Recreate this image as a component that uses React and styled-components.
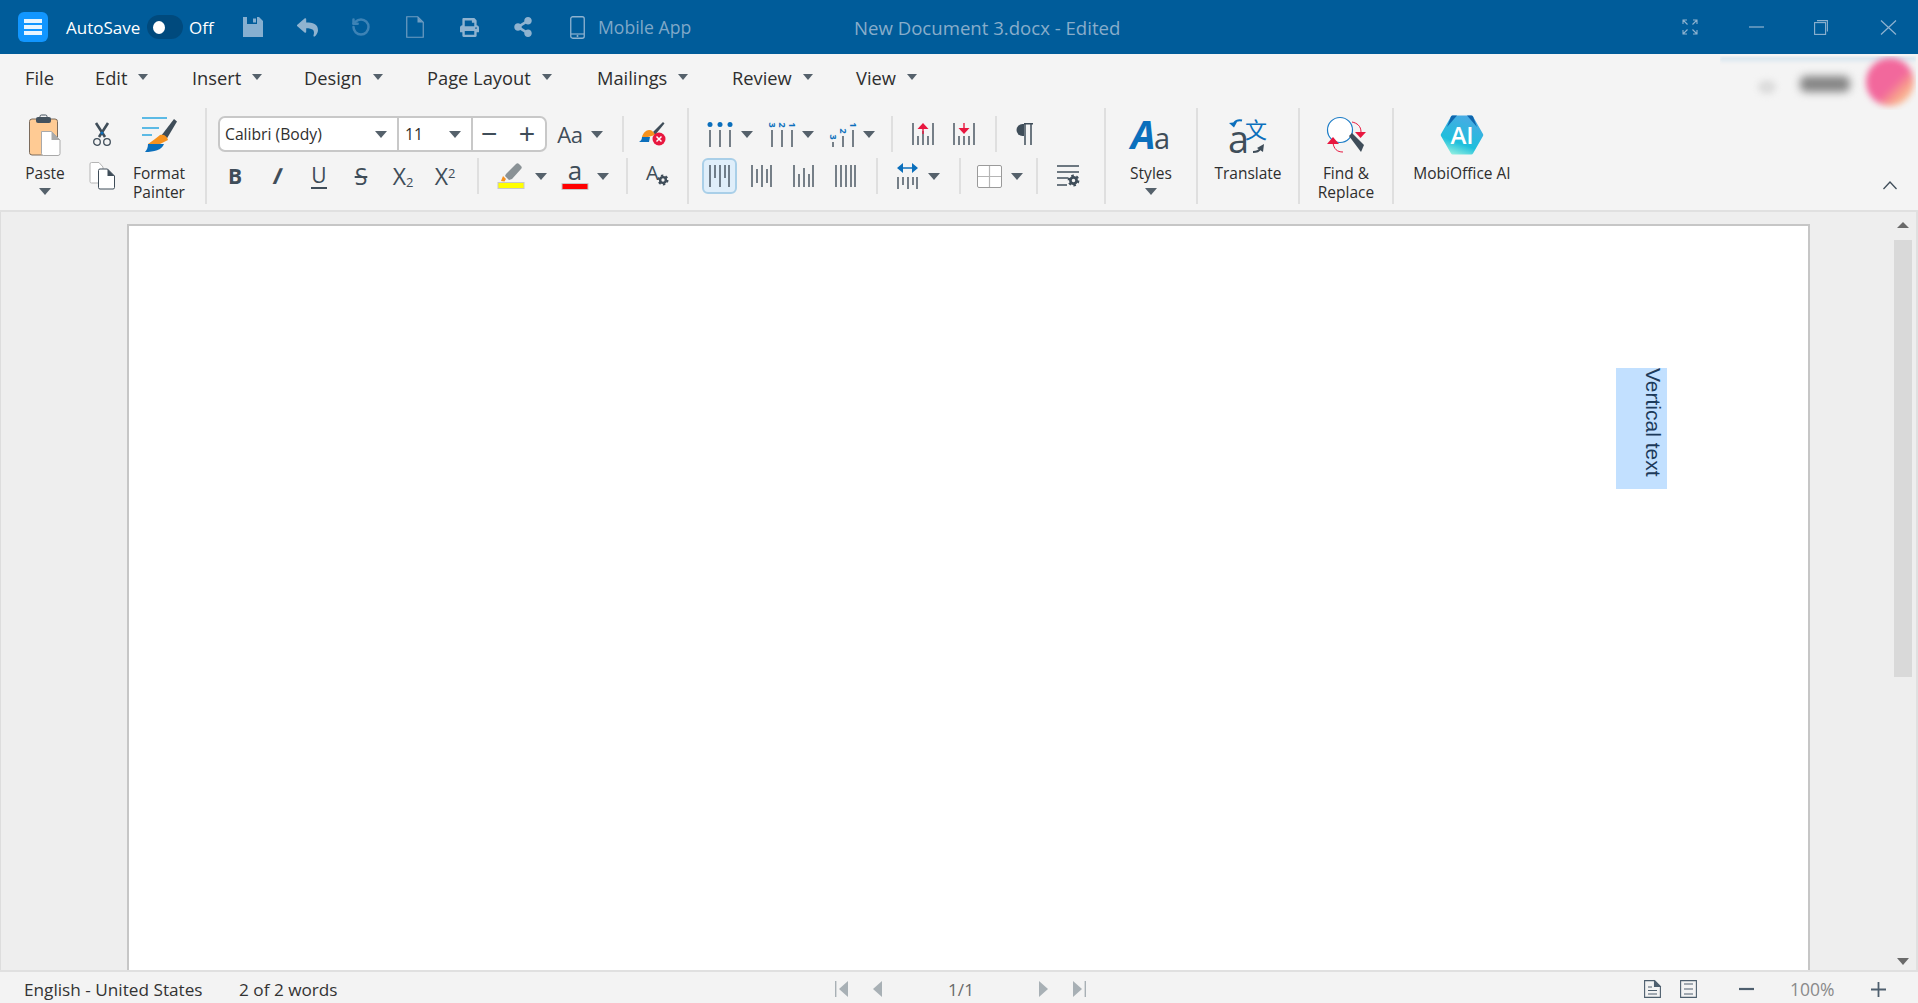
import React from 'react';
import styled, { createGlobalStyle } from 'styled-components';
import { FaPrint, FaReply, FaShareAlt } from 'react-icons/fa';
import { RotateCcw } from 'lucide-react';

const ICON = '#3f4d59';
const BLUE = '#0b6fbc';
const RED = '#e8173f';
const UI_FONT = '"Open Sans", "Noto Sans", sans-serif';

const GlobalStyle = createGlobalStyle`
  html, body {
    margin: 0;
    height: 100%;
    overflow: hidden;
    background: #f4f4f4;
  }
  #root {
    height: 100%;
  }
  svg {
    overflow: visible;
  }
`;

const AppWindow = styled.div`
  display: flex;
  flex-direction: column;
  height: 100%;
  font-family: ${UI_FONT};
  color: #2e2e2e;
`;

/* title bar */

const TitleBar = styled.header`
  display: flex;
  align-items: center;
  flex: none;
  height: 54px;
  padding-left: 18px;
  background: #005c9a;
  color: #fff;
`;

const Logo = styled.div`
  display: flex;
  flex-direction: column;
  justify-content: center;
  gap: 2px;
  box-sizing: border-box;
  width: 30px;
  height: 30px;
  padding: 0 6px;
  border-radius: 6px;
  background: #1196ff;
`;

const LogoBar = styled.span`
  display: block;
  height: 4px;
  background: #e8f5ff;
`;

const AutoSaveLabel = styled.span`
  flex: none;
  width: 75px;
  margin-left: 18px;
  font-size: 17px;
  white-space: nowrap;
`;

const Toggle = styled.span`
  display: flex;
  align-items: center;
  box-sizing: border-box;
  flex: none;
  width: 36px;
  height: 24px;
  margin-left: 6px;
  padding-left: 6px;
  border-radius: 12px;
  background: #004a7d;
`;

const ToggleKnob = styled.span`
  display: block;
  width: 12px;
  height: 13px;
  border-radius: 50%;
  background: #fff;
`;

const OffLabel = styled.span`
  flex: none;
  width: 25px;
  margin-left: 6px;
  font-size: 17px;
`;

const TitleTool = styled.span`
  display: flex;
  align-items: center;
  justify-content: center;
  flex: none;
  width: ${(p) => p.$w}px;
  margin-left: ${(p) => p.$ml}px;
  color: ${(p) => p.$color || '#8fb3d0'};
`;

const MobileLabel = styled.span`
  flex: none;
  width: 93px;
  margin-left: 13px;
  font-size: 17.6px;
  white-space: nowrap;
  color: #7fa8c8;
`;

const DocTitle = styled.span`
  flex: none;
  width: 268px;
  margin-left: 163px;
  font-size: 18.6px;
  white-space: nowrap;
  color: #88adca;
`;

/* menu */

const MenuBar = styled.nav`
  position: relative;
  display: flex;
  align-items: center;
  flex: none;
  height: 51px;
  padding: 0 0 5px 25px;
  box-sizing: border-box;
  font-size: 18.3px;
`;

const MenuItem = styled.span`
  display: flex;
  align-items: center;
  flex: none;
  width: ${(p) => p.$w}px;
`;

const Caret = styled.span`
  display: block;
  flex: none;
  width: 0;
  height: 0;
  margin-left: ${(p) => p.$ml || 0}px;
  border-left: ${(p) => (p.$size || 12) / 2}px solid transparent;
  border-right: ${(p) => (p.$size || 12) / 2}px solid transparent;
  border-top: ${(p) => Math.round((p.$size || 12) * 0.55)}px solid #55616b;
`;

const BlurredAccount = styled.div`
  position: absolute;
  top: 2px;
  right: 2px;
  width: 196px;
  height: 54px;
  overflow: hidden;
`;

const BlurBand = styled.span`
  position: absolute;
  top: 1px;
  left: 0;
  right: 0;
  height: 6px;
  background: linear-gradient(#d6e4ee, #eef2f4);
  filter: blur(1px);
`;

const BlurBlob = styled.span`
  position: absolute;
  left: ${(p) => p.$left}px;
  top: ${(p) => p.$top}px;
  width: ${(p) => p.$w}px;
  height: ${(p) => p.$h}px;
  border-radius: ${(p) => p.$radius};
  background: ${(p) => p.$bg};
  filter: blur(${(p) => p.$blur}px);
`;

/* ribbon */

const Ribbon = styled.section`
  position: relative;
  display: flex;
  align-items: flex-start;
  flex: none;
  box-sizing: border-box;
  height: 107px;
  padding-top: 3px;
  border-bottom: 2px solid #e0e0e0;
`;

const RibbonSep = styled.span`
  display: block;
  flex: none;
  width: 2px;
  height: 96px;
  background: #dfdfdf;
`;

const ClipboardGroup = styled.div`
  display: flex;
  flex: none;
  width: 205px;
`;

const RibbonButton = styled.div`
  display: flex;
  flex-direction: column;
  align-items: center;
  flex: none;
  width: ${(p) => p.$w}px;
`;

const IconSlot = styled.div`
  display: flex;
  align-items: center;
  justify-content: center;
  height: 54px;
  margin-bottom: 2px;
`;

const ButtonLabel = styled.span`
  font-size: 15.5px;
  line-height: 19px;
  text-align: center;
  white-space: nowrap;
`;

const ButtonCaret = styled(Caret)`
  margin-top: 5px;
`;

const ClipColumn = styled.div`
  display: flex;
  flex-direction: column;
  align-items: center;
  gap: 16px;
  flex: none;
  width: 24px;
  padding-top: 15px;
`;

const ToolGroup = styled.div`
  display: flex;
  flex-direction: column;
  gap: 6px;
  flex: none;
  box-sizing: border-box;
  width: ${(p) => p.$w}px;
  padding-top: 8px;
`;

const ToolRow = styled.div`
  display: flex;
  align-items: center;
  height: 36px;
  padding-left: ${(p) => p.$pl}px;
`;

const Tool = styled.span`
  display: flex;
  align-items: center;
  justify-content: center;
  flex: none;
  width: ${(p) => p.$w}px;
  margin-left: ${(p) => p.$ml || 0}px;
  color: ${ICON};
  font-family: "Liberation Sans", sans-serif;
  font-size: 22px;
`;

const ActiveTool = styled(Tool)`
  box-sizing: border-box;
  height: 36px;
  border: 2px solid #a9cfe8;
  border-radius: 6px;
  background: #dfeefa;
`;

const RowSep = styled.span`
  display: block;
  flex: none;
  width: 2px;
  height: 36px;
  margin-left: ${(p) => p.$ml}px;
  background: #dfdfdf;
`;

const FontCombo = styled.div`
  display: flex;
  align-items: stretch;
  box-sizing: border-box;
  flex: none;
  width: 329px;
  height: 36px;
  border: 2px solid #c8c8c8;
  border-radius: 7px;
  background: #fff;
`;

const ComboCell = styled.div`
  display: flex;
  align-items: center;
  justify-content: space-between;
  box-sizing: border-box;
  flex: none;
  width: ${(p) => p.$w}px;
  padding: 0 10px 0 ${(p) => p.$pl}px;
  border-left: ${(p) => (p.$divider ? '2px solid #c8c8c8' : 'none')};
  font-size: 15.7px;
  color: #2e2e2e;
`;

const StepSign = styled.span`
  color: ${ICON};
  font-family: "Liberation Sans", sans-serif;
  font-size: 28px;
  font-weight: 300;
  line-height: 30px;
`;

const CaseLabel = styled.span`
  font-size: 22px;
  letter-spacing: -0.4px;
  color: ${ICON};
  font-family: ${UI_FONT};
`;

const BoldGlyph = styled.b`
  font-family: ${UI_FONT};
  font-size: 21px;
`;

const ItalicGlyph = styled.i`
  display: inline-block;
  font-size: 23px;
  font-weight: 700;
  transform: skewX(-14deg);
`;

const UnderGlyph = styled.span`
  font-family: ${UI_FONT};
  font-size: 21px;
  line-height: 24px;
  border-bottom: 2px solid ${ICON};
`;

const StrikeGlyph = styled.span`
  font-family: ${UI_FONT};
  font-size: 23px;
  text-decoration: line-through;
  text-decoration-thickness: 1.5px;
`;

const ScriptGlyph = styled.span`
  font-family: ${UI_FONT};
  font-size: 23px;
  white-space: nowrap;
`;

const ScriptMark = styled.span`
  font-size: 13px;
  position: relative;
  top: ${(p) => p.$top}px;
`;

const CollapseButton = styled.span`
  position: absolute;
  right: 21px;
  bottom: 20px;
  display: flex;
  color: ${ICON};
`;

/* document */

const DocArea = styled.main`
  display: flex;
  flex: 1;
  min-height: 0;
  box-sizing: border-box;
  padding: 12px 4px 0 126px;
  border-left: 1px solid #dddddd;
  border-right: 2px solid #e0e0e0;
  background: #eeeeee;
`;

const Page = styled.div`
  position: relative;
  box-sizing: border-box;
  flex: none;
  width: 1683px;
  border: 2px solid #c6c6c6;
  border-bottom: none;
  background: #fff;
`;

const VerticalText = styled.div`
  position: absolute;
  top: 142px;
  left: 1487px;
  box-sizing: border-box;
  width: 51px;
  height: 121px;
  padding-right: 2px;
  background: #c2e0ff;
  color: #1c3a5a;
  font-family: "Liberation Sans", sans-serif;
  font-size: 21px;
  line-height: 24px;
  writing-mode: vertical-rl;
  white-space: nowrap;
`;

const ScrollBar = styled.div`
  display: flex;
  flex-direction: column;
  align-items: center;
  flex: none;
  width: 18px;
  margin: -2px 0 0 84px;
  padding-bottom: 5px;
  box-sizing: border-box;
`;

const ScrollUp = styled.span`
  flex: none;
  width: 0;
  height: 0;
  border-left: 6px solid transparent;
  border-right: 6px solid transparent;
  border-bottom: 6px solid #6a6a6a;
`;

const ScrollThumb = styled.span`
  flex: none;
  width: 18px;
  height: 437px;
  margin-top: 12px;
  background: #d9d9d9;
`;

const ScrollDown = styled.span`
  flex: none;
  width: 0;
  height: 0;
  margin-top: auto;
  border-left: 6px solid transparent;
  border-right: 6px solid transparent;
  border-top: 7px solid #6a6a6a;
`;

/* status bar */

const StatusBar = styled.footer`
  display: flex;
  align-items: center;
  flex: none;
  box-sizing: border-box;
  height: 33px;
  padding: 3px 0 0 24px;
  border-top: 2px solid #e0e0e0;
  background: #f3f3f3;
  font-size: 17.2px;
  color: #333;
`;

const StatusText = styled.span`
  flex: none;
  width: ${(p) => p.$w}px;
  margin-left: ${(p) => p.$ml || 0}px;
  white-space: nowrap;
`;

const StatusIcon = styled.span`
  display: flex;
  justify-content: center;
  flex: none;
  width: ${(p) => p.$w}px;
  margin-left: ${(p) => p.$ml}px;
`;

const PageCount = styled.span`
  flex: none;
  width: 26px;
  margin-left: 63px;
  color: #6a6a6a;
  white-space: nowrap;
`;

const ZoomValue = styled.span`
  flex: none;
  width: 46px;
  margin-left: 36px;
  color: #8a8a8a;
  font-size: 17.500px;
  white-space: nowrap;
`;

/* icons */

const Bars = ({ w = 21, h = 22, lines, children }) => (
  <svg width={w} height={h} viewBox={`0 0 ${w} ${h}`}>
    {lines.map(([x, y1, y2]) => (
      <line key={`${x}-${y1}`} x1={x} x2={x} y1={y1} y2={y2} stroke={ICON} strokeWidth="1.4" />
    ))}
    {children}
  </svg>
);

const Gear = ({ cx, cy, r = 4, color = ICON }) => (
  <g fill="none" stroke={color}>
    <circle cx={cx} cy={cy} r={r * 0.72} strokeWidth={r * 0.62} />
    <circle cx={cx} cy={cy} r={r * 1.12} strokeWidth={r * 0.5} strokeDasharray={`${r * 0.58} ${r * 0.58}`} />
  </g>
);

const SaveIcon = () => (
  <svg width="20" height="20" viewBox="0 0 20 20">
    <path d="M0 0h16l4 4v16H0z" fill="#86afd0" />
    <path d="M4 0h10v7H4z" fill="#005c9a" />
    <path d="M10 1.500h3v4h-3z" fill="#86afd0" />
  </svg>
);

const PasteIcon = () => (
  <svg width="32" height="41" viewBox="0 0 32 41">
    <rect x="0.5" y="4" width="28" height="36" rx="2.5" fill="#ffcb94" stroke="#7b6b5c" />
    <rect x="7" y="2" width="15" height="6" rx="2" fill="#44525e" />
    <rect x="11" y="0" width="7" height="4" rx="1.5" fill="none" stroke="#44525e" />
    <path d="M12.5 16.5h10l8.5 8.5v13.5a2 2 0 0 1-2 2H14.500a2 2 0 0 1-2-2z" fill="#fff" stroke="#a9a9a9" />
    <path d="M22.500 16.500l8.500 8.500h-8.500z" fill="#a9a9a9" />
  </svg>
);

const ScissorsIcon = () => (
  <svg width="18" height="23" viewBox="0 0 18 23">
    <path d="M3 0l9 14M15 0L6 14" stroke={ICON} strokeWidth="2.6" fill="none" />
    <circle cx="9" cy="10" r="1.5" fill={BLUE} />
    <circle cx="4" cy="19" r="3.300" fill="none" stroke={ICON} strokeWidth="1.300" />
    <circle cx="14" cy="19" r="3.300" fill="none" stroke={ICON} strokeWidth="1.300" />
  </svg>
);

const CopyIcon = () => (
  <svg width="26" height="28" viewBox="0 0 26 28">
    <path d="M1 2a1.500 1.500 0 0 1 1.500-1.500H10L14 5v16H2.500A1.500 1.500 0 0 1 1 19.500z" fill="#fff" stroke="#b5b5b5" />
    <path d="M9.500 8.500a1.500 1.500 0 0 1 1.500-1.500h7.500l7 7v11.500a1.500 1.500 0 0 1-1.500 1.500H11a1.500 1.500 0 0 1-1.500-1.500z" fill="#fff" stroke={ICON} />
    <path d="M18.500 7v7h7z" fill={ICON} />
  </svg>
);

const PainterIcon = () => (
  <svg width="36" height="36" viewBox="0 0 36 36">
    <path d="M1 1h25M1 11h17M1 18h10" stroke="#2aa6df" strokeWidth="1.300" />
    <path d="M20 19L33 2l3 2.500L25 23z" fill={ICON} />
    <path d="M19 18c4-1 7 1 8 5l-8 4H7c4-3 7-5 12-9z" fill="#f7921e" />
    <path d="M7 27h16c-2 6-10 8-19 8 2-2 3-5 3-8z" fill="#0b6fbc" />
  </svg>
);

const BulletsIcon = () => (
  <Bars w={26} h={25} lines={[[3, 8, 25], [13, 8, 25], [23, 8, 25]]}>
    <circle cx="3" cy="2.500" r="2.500" fill={BLUE} />
    <circle cx="13" cy="2.500" r="2.500" fill={BLUE} />
    <circle cx="23" cy="2.500" r="2.500" fill={BLUE} />
  </Bars>
);

const RotatedDigit = ({ x, y, children }) => (
  <text
    transform={`translate(${x} ${y}) rotate(90)`}
    fill={BLUE}
    fontFamily="Open Sans"
    fontSize="9"
    fontWeight="700"
    textAnchor="middle"
    dominantBaseline="central"
  >
    {children}
  </text>
);

const NumberedIcon = () => (
  <Bars w={27} h={25} lines={[[3, 8, 25], [13, 8, 25], [23, 8, 25]]}>
    <RotatedDigit x={3} y={3}>3</RotatedDigit>
    <RotatedDigit x={13} y={3}>2</RotatedDigit>
    <RotatedDigit x={23} y={3}>1</RotatedDigit>
  </Bars>
);

const SteppedIcon = () => (
  <Bars w={26} h={25} lines={[[3, 20, 25], [13, 14, 25], [23, 8, 25]]}>
    <RotatedDigit x={3} y={15}>3</RotatedDigit>
    <RotatedDigit x={13} y={9}>2</RotatedDigit>
    <RotatedDigit x={23} y={3}>1</RotatedDigit>
  </Bars>
);

const TabUpIcon = () => (
  <Bars w={22} h={24} lines={[[1, 1, 23], [21, 1, 23], [6, 14, 23], [11, 9, 23], [16, 14, 23]]}>
    <path d="M11 1l5.500 6h-11z" fill={RED} />
    <rect x="10.300" y="6" width="1.400" height="6" fill={RED} />
  </Bars>
);

const TabDownIcon = () => (
  <Bars w={22} h={24} lines={[[1, 1, 23], [21, 1, 23], [6, 14, 23], [11, 14, 23], [16, 14, 23]]}>
    <path d="M11 12l5.500-6h-11z" fill={RED} />
    <rect x="10.300" y="1" width="1.400" height="6" fill={RED} />
  </Bars>
);

const PilcrowIcon = () => (
  <svg width="16" height="22" viewBox="0 0 16 22">
    <path d="M7 1H5.500a5.500 5.500 0 0 0 0 12H7z" fill={ICON} />
    <path d="M7 .7h9M8 1v21M14 1v21" stroke={ICON} strokeWidth="1.500" />
  </svg>
);

const JustifyIcon = () => (
  <Bars w={21} h={26} lines={[[1, 14, 26], [6, 14, 22], [11, 14, 26], [16, 14, 22], [20, 14, 26]]}>
    <path d="M0 5l6-5v10zM21 5l-6-5v10z" fill={BLUE} />
    <path d="M5 5h11" stroke={BLUE} strokeWidth="1.500" />
  </Bars>
);

const TableIcon = () => (
  <svg width="25" height="23" viewBox="0 0 25 23">
    <rect x="0.500" y="0.500" width="24" height="22" rx="1.500" fill="#fff" stroke="#9a9a9a" />
    <path d="M12.500 1v21M1 11.500h23" stroke="#b5b5b5" strokeWidth="1.200" />
  </svg>
);

const ParagraphSettingsIcon = () => (
  <svg width="24" height="22" viewBox="0 0 24 22">
    <path d="M1 1h22M1 7h22M1 13h11M1 20h10" stroke={ICON} strokeWidth="1.300" />
    <Gear cx={17.500} cy={15.500} r={4.300} />
  </svg>
);

const EraserIcon = () => (
  <svg width="27" height="24" viewBox="0 0 27 24">
    <path d="M14 10L24 0l1.500 1.500L16 13z" fill={ICON} />
    <path d="M10 8c3 0 5 2 6 5l-7 2H3c1-4 4-7 7-7z" fill="#f7921e" />
    <path d="M3 15h8l-1 5H0c2-1 3-3 3-5z" fill={BLUE} />
    <circle cx="20" cy="17" r="6.500" fill={RED} />
    <path d="M17.500 14.500l5 5M22.500 14.500l-5 5" stroke="#fff" strokeWidth="1.500" />
  </svg>
);

const HighlightIcon = () => (
  <svg width="28" height="26" viewBox="0 0 28 26">
    <path d="M9 11l10-10c1-1 2-1 3 0l2 2c1 1 1 2 0 3L15 16l-3 1-4-4z" fill="#8a9296" />
    <path d="M6 13l3 3-1.500 2.500-3.500-.5z" fill="#f7921e" />
    <rect x="1" y="19.500" width="26" height="6" fill="#ffff00" stroke="#c8c8c8" />
  </svg>
);

const FontColorIcon = () => (
  <svg width="28" height="28" viewBox="0 0 28 28">
    <text x="14" y="18" textAnchor="middle" fontFamily="Open Sans" fontSize="26" fill={ICON}>a</text>
    <rect x="1" y="21.500" width="26" height="6" fill="#ff0000" stroke="#c8c8c8" />
  </svg>
);

const StyleSettingsIcon = () => (
  <svg width="23" height="24" viewBox="0 0 23 24">
    <text x="0" y="16" fontFamily="Open Sans" fontSize="20" fill={ICON}>A</text>
    <Gear cx={17} cy={16} r={4} />
  </svg>
);

const StylesIcon = () => (
  <svg width="38" height="30" viewBox="0 0 38 30">
    <text x="-1" y="29" fontFamily="Open Sans" fontSize="39" fontStyle="italic" fontWeight="700" fill={BLUE}>A</text>
    <text x="22" y="29" fontFamily="Open Sans" fontSize="29" fill={ICON}>a</text>
  </svg>
);

const TranslateIcon = () => (
  <svg width="38" height="37" viewBox="0 0 38 37">
    <path d="M13 3.500C9 2.500 7 3.500 5 6" fill="none" stroke={BLUE} strokeWidth="2" />
    <path d="M0 6l8-1-3 5.500z" fill={BLUE} />
    <text x="27" y="21" textAnchor="middle" fontFamily="Noto Sans CJK SC" fontSize="22" fill={BLUE}>文</text>
    <text x="-1" y="36" fontFamily="Open Sans" fontSize="38" fill={ICON}>a</text>
    <path d="M24 35c3 0 6-1 7-3" fill="none" stroke={ICON} strokeWidth="2" />
    <path d="M35 27l-1 8-6-4z" fill={ICON} />
  </svg>
);

const FindIcon = () => (
  <svg width="40" height="37" viewBox="0 0 40 37">
    <circle cx="14" cy="13" r="12.500" fill="#fff" stroke="#1c7cc6" strokeWidth="1.200" />
    <path d="M23 19l3-3 12 12-3 7z" fill={ICON} />
    <path d="M26 5c5 1 9 4 9 10" fill="none" stroke={RED} strokeWidth="1" />
    <path d="M29 15h11l-5.500 6z" fill={RED} />
    <path d="M17 35C11 35 8 32 7 26" fill="none" stroke={RED} strokeWidth="1" />
    <path d="M1 27h12L7 20z" fill={RED} />
  </svg>
);

const MobiAiIcon = () => (
  <svg width="44" height="40" viewBox="0 0 44 40">
    <defs>
      <linearGradient id="aiFill" x1="0.300" y1="1" x2="0.700" y2="0">
        <stop offset="0" stopColor="#8feee0" />
        <stop offset="0.300" stopColor="#1fbfdc" />
        <stop offset="1" stopColor="#4ba9e4" />
      </linearGradient>
    </defs>
    <path d="M11 1.500a2 2 0 0 1 1.700-1h18.600a2 2 0 0 1 1.700 1l10 17.500a2 2 0 0 1 0 2L33 38.500a2 2 0 0 1-1.700 1H12.700a2 2 0 0 1-1.700-1L1 21a2 2 0 0 1 0-2z" fill="url(#aiFill)" />
    <path d="M11 1.500a2 2 0 0 1 1.700-1H17L7 12zM33 1.500a2 2 0 0 0-1.700-1H27l10 11.500z" fill="#0f66ad" />
    <text x="22" y="28.500" textAnchor="middle" fontFamily="Open Sans" fontSize="24" fontWeight="600" fill="#fff">AI</text>
  </svg>
);

const Chevron = () => (
  <svg width="14" height="9" viewBox="0 0 14 9">
    <path d="M.5 8L7 1l6.500 7" fill="none" stroke="currentColor" strokeWidth="1.300" />
  </svg>
);

const PageOutlineIcon = () => (
  <svg width="18" height="22" viewBox="0 0 18 22">
    <path d="M.75.75h11l5.500 5.500v15H.75z" fill="none" stroke="#6f9dc2" strokeWidth="1.200" />
    <path d="M11.500 1v5.500H17z" fill="#6f9dc2" />
  </svg>
);

const PhoneIcon = () => (
  <svg width="15" height="23" viewBox="0 0 15 23">
    <rect x="0.750" y="0.750" width="13.500" height="21.500" rx="2" fill="none" stroke="#8fb3d0" strokeWidth="1.300" />
    <path d="M1 18h13" stroke="#8fb3d0" strokeWidth="1.200" />
    <circle cx="7.500" cy="20" r="1" fill="#8fb3d0" />
  </svg>
);

const FullscreenIcon = () => (
  <svg width="16" height="16" viewBox="0 0 16 16" fill="none" stroke="#8fb3d0" strokeWidth="1.100">
    <path d="M1 5V1h4M11 1h4v4M15 11v4h-4M5 15H1v-4M1 1l4.500 4.500M15 1l-4.500 4.500M15 15l-4.500-4.500M1 15l4.500-4.500" />
  </svg>
);

const MinimizeIcon = () => (
  <svg width="15" height="2" viewBox="0 0 15 2">
    <path d="M0 1h15" stroke="#8fb3d0" strokeWidth="1.200" />
  </svg>
);

const RestoreIcon = () => (
  <svg width="14" height="15" viewBox="0 0 14 15" fill="none" stroke="#8fb3d0" strokeWidth="1.100">
    <rect x="0.600" y="2.600" width="11" height="11.800" />
    <path d="M3 .6h10.400v11" />
  </svg>
);

const CloseIcon = () => (
  <svg width="17" height="15" viewBox="0 0 17 15">
    <path d="M1 .5l15 14M16 .5l-15 14" stroke="#8fb3d0" strokeWidth="1.200" />
  </svg>
);

const NavIcon = ({ flip, edge }) => (
  <svg width="14" height="16" viewBox="0 0 14 16" transform={flip ? 'scale(-1 1)' : undefined}>
    {edge && <path d="M.7 0v16" stroke="#a8b0b5" strokeWidth="1.400" />}
    <path d={edge ? 'M4 8l9-8v16z' : 'M2 8l9-8v16z'} fill="#a8b0b5" />
  </svg>
);

const PageViewIcon = ({ fold }) => (
  <svg width="17" height="18" viewBox="0 0 17 18" fill="none" stroke="#4e5f6e" strokeWidth="1.100">
    <path d={fold ? 'M.6.6h10l5.800 5.800v11H.6z' : 'M.6.600h15.800v16.800H.6z'} />
    {fold && <path d="M10.500 1v5.500H16z" fill="#4e5f6e" />}
    <path d={fold ? 'M4 7h4M4 10.500h9M4 14h9' : 'M4 4h9M4 9h9M4 14h9'} />
  </svg>
);

const ZoomOutIcon = () => (
  <svg width="15" height="4" viewBox="0 0 15 4">
    <path d="M0 2h15" stroke="#4e5f6e" strokeWidth="2.200" />
  </svg>
);

const ZoomInIcon = () => (
  <svg width="15" height="15" viewBox="0 0 15 15">
    <path d="M0 7.500h15M7.500 0v15" stroke="#4e5f6e" strokeWidth="1.800" />
  </svg>
);

const topBars = [[1, 0, 22], [6, 0, 13], [11, 0, 22], [16, 0, 13], [20, 0, 22]];
const centerBars = [[1, 0, 22], [6, 4, 18], [11, 0, 22], [16, 4, 18], [20, 0, 22]];
const bottomBars = [[1, 0, 22], [6, 9, 22], [11, 3, 22], [16, 9, 22], [20, 0, 22]];
const fullBars = [[1, 0, 22], [6, 0, 22], [11, 0, 22], [16, 0, 22], [20, 0, 22]];

const menuItems = [
  { label: 'Edit', w: 97 },
  { label: 'Insert', w: 112 },
  { label: 'Design', w: 123 },
  { label: 'Page Layout', w: 170 },
  { label: 'Mailings', w: 135 },
  { label: 'Review', w: 124 },
  { label: 'View', w: 70 },
];

function App() {
  return (
    <AppWindow>
      <GlobalStyle />
      <TitleBar>
        <Logo>
          <LogoBar />
          <LogoBar />
          <LogoBar />
        </Logo>
        <AutoSaveLabel>AutoSave</AutoSaveLabel>
        <Toggle><ToggleKnob /></Toggle>
        <OffLabel>Off</OffLabel>
        <TitleTool $w={20} $ml={29}><SaveIcon /></TitleTool>
        <TitleTool $w={22} $ml={33}><FaReply size={21} /></TitleTool>
        <TitleTool $w={20} $ml={33} $color="#3d83b6"><RotateCcw size={20} strokeWidth={3} /></TitleTool>
        <TitleTool $w={18} $ml={35}><PageOutlineIcon /></TitleTool>
        <TitleTool $w={20} $ml={35}><FaPrint size={19} /></TitleTool>
        <TitleTool $w={20} $ml={34}><FaShareAlt size={20} /></TitleTool>
        <TitleTool $w={15} $ml={37}><PhoneIcon /></TitleTool>
        <MobileLabel>Mobile App</MobileLabel>
        <DocTitle>New Document 3.docx - Edited</DocTitle>
        <TitleTool $w={16} $ml={560}><FullscreenIcon /></TitleTool>
        <TitleTool $w={15} $ml={51}><MinimizeIcon /></TitleTool>
        <TitleTool $w={14} $ml={50}><RestoreIcon /></TitleTool>
        <TitleTool $w={17} $ml={52}><CloseIcon /></TitleTool>
      </TitleBar>

      <MenuBar>
        <MenuItem $w={70}>File</MenuItem>
        {menuItems.map((item) => (
          <MenuItem key={item.label} $w={item.w}>
            {item.label}
            <Caret $size={11} $ml={11} />
          </MenuItem>
        ))}
        <BlurredAccount>
          <BlurBand />
          <BlurBlob $left={38} $top={24} $w={18} $h={14} $radius="50%" $bg="#dcdcdc" $blur={3} />
          <BlurBlob $left={80} $top={20} $w={50} $h={16} $radius="6px" $bg="#858585" $blur={4} />
          <BlurBlob $left={146} $top={2} $w={48} $h={48} $radius="50%" $bg="linear-gradient(135deg, #f2689c 55%, #f8a08c 72%, #fbe3a4)" $blur={3} />
        </BlurredAccount>
      </MenuBar>

      <Ribbon>
        <ClipboardGroup>
          <RibbonButton $w={90}>
            <IconSlot><PasteIcon /></IconSlot>
            <ButtonLabel>Paste</ButtonLabel>
            <ButtonCaret />
          </RibbonButton>
          <ClipColumn>
            <ScissorsIcon />
            <CopyIcon />
          </ClipColumn>
          <RibbonButton $w={90}>
            <IconSlot><PainterIcon /></IconSlot>
            <ButtonLabel>Format<br />Painter</ButtonLabel>
          </RibbonButton>
        </ClipboardGroup>
        <RibbonSep />

        <ToolGroup $w={480}>
          <ToolRow $pl={11}>
            <FontCombo>
              <ComboCell $w={177} $pl={5}>Calibri (Body)<Caret /></ComboCell>
              <ComboCell $w={74} $pl={6} $divider>11<Caret /></ComboCell>
              <ComboCell $w={74} $pl={8} $divider><StepSign>−</StepSign><StepSign>+</StepSign></ComboCell>
            </FontCombo>
            <Tool $w={26} $ml={10}><CaseLabel>Aa</CaseLabel></Tool>
            <Caret $ml={8} />
            <RowSep $ml={19} />
            <Tool $w={27} $ml={15}><EraserIcon /></Tool>
          </ToolRow>
          <ToolRow $pl={7}>
            <Tool $w={42}><BoldGlyph>B</BoldGlyph></Tool>
            <Tool $w={42}><ItalicGlyph>I</ItalicGlyph></Tool>
            <Tool $w={42}><UnderGlyph>U</UnderGlyph></Tool>
            <Tool $w={42}><StrikeGlyph>S</StrikeGlyph></Tool>
            <Tool $w={42}><ScriptGlyph>X<ScriptMark $top={2}>2</ScriptMark></ScriptGlyph></Tool>
            <Tool $w={42}><ScriptGlyph>X<ScriptMark $top={-7}>2</ScriptMark></ScriptGlyph></Tool>
            <RowSep $ml={11} />
            <Tool $w={28} $ml={18}><HighlightIcon /></Tool>
            <Caret $ml={10} />
            <Tool $w={28} $ml={14}><FontColorIcon /></Tool>
            <Caret $ml={8} />
            <RowSep $ml={17} />
            <Tool $w={23} $ml={18}><StyleSettingsIcon /></Tool>
          </ToolRow>
        </ToolGroup>
        <RibbonSep />

        <ToolGroup $w={415}>
          <ToolRow $pl={18}>
            <Tool $w={26}><BulletsIcon /></Tool>
            <Caret $ml={8} />
            <Tool $w={27} $ml={16}><NumberedIcon /></Tool>
            <Caret $ml={6} />
            <Tool $w={26} $ml={16}><SteppedIcon /></Tool>
            <Caret $ml={7} />
            <RowSep $ml={16} />
            <Tool $w={22} $ml={19}><TabUpIcon /></Tool>
            <Tool $w={22} $ml={19}><TabDownIcon /></Tool>
            <RowSep $ml={20} />
            <Tool $w={16} $ml={20}><PilcrowIcon /></Tool>
          </ToolRow>
          <ToolRow $pl={13}>
            <ActiveTool $w={35}><Bars lines={topBars} /></ActiveTool>
            <Tool $w={21} $ml={14}><Bars lines={centerBars} /></Tool>
            <Tool $w={21} $ml={21}><Bars lines={bottomBars} /></Tool>
            <Tool $w={21} $ml={21}><Bars lines={fullBars} /></Tool>
            <RowSep $ml={20} />
            <Tool $w={21} $ml={19}><JustifyIcon /></Tool>
            <Caret $ml={10} />
            <RowSep $ml={19} />
            <Tool $w={25} $ml={16}><TableIcon /></Tool>
            <Caret $ml={9} />
            <RowSep $ml={13} />
            <Tool $w={24} $ml={18}><ParagraphSettingsIcon /></Tool>
          </ToolRow>
        </ToolGroup>
        <RibbonSep />

        <RibbonButton $w={90}>
          <IconSlot><StylesIcon /></IconSlot>
          <ButtonLabel>Styles</ButtonLabel>
          <ButtonCaret />
        </RibbonButton>
        <RibbonSep />
        <RibbonButton $w={100}>
          <IconSlot><TranslateIcon /></IconSlot>
          <ButtonLabel>Translate</ButtonLabel>
        </RibbonButton>
        <RibbonSep />
        <RibbonButton $w={92}>
          <IconSlot><FindIcon /></IconSlot>
          <ButtonLabel>Find &amp;<br />Replace</ButtonLabel>
        </RibbonButton>
        <RibbonSep />
        <RibbonButton $w={136}>
          <IconSlot><MobiAiIcon /></IconSlot>
          <ButtonLabel>MobiOffice AI</ButtonLabel>
        </RibbonButton>
        <CollapseButton><Chevron /></CollapseButton>
      </Ribbon>

      <DocArea>
        <Page>
          <VerticalText>Vertical text</VerticalText>
        </Page>
        <ScrollBar>
          <ScrollUp />
          <ScrollThumb />
          <ScrollDown />
        </ScrollBar>
      </DocArea>

      <StatusBar>
        <StatusText $w={179}>English - United States</StatusText>
        <StatusText $w={100} $ml={36}>2 of 2 words</StatusText>
        <StatusIcon $w={14} $ml={496}><NavIcon edge /></StatusIcon>
        <StatusIcon $w={14} $ml={22}><NavIcon /></StatusIcon>
        <PageCount>1/1</PageCount>
        <StatusIcon $w={14} $ml={62}><NavIcon flip /></StatusIcon>
        <StatusIcon $w={14} $ml={22}><NavIcon flip edge /></StatusIcon>
        <StatusIcon $w={17} $ml={558}><PageViewIcon fold /></StatusIcon>
        <StatusIcon $w={17} $ml={19}><PageViewIcon /></StatusIcon>
        <StatusIcon $w={15} $ml={42}><ZoomOutIcon /></StatusIcon>
        <ZoomValue>100%</ZoomValue>
        <StatusIcon $w={15} $ml={35}><ZoomInIcon /></StatusIcon>
      </StatusBar>
    </AppWindow>
  );
}

export default App;
